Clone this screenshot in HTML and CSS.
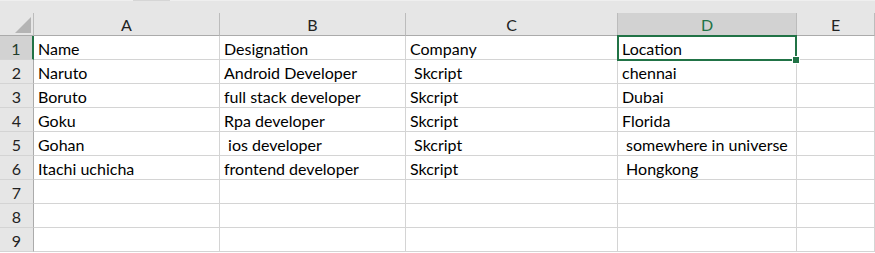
FILE: index.html
```html
<!DOCTYPE html>
<html>
<head>
<meta charset="utf-8">
<link rel="stylesheet" href="styles.css">
</head>
<body>
<div class="topstrip"><div class="tab-light"></div><div class="tab-dark"></div><div class="tab-rest"></div></div>
<div class="sheet">
  <div class="grid">
    <div class="corner"><div class="tri"></div></div>
    <div class="ch">A</div>
    <div class="ch">B</div>
    <div class="ch">C</div>
    <div class="ch sel">D</div>
    <div class="ch">E</div>

    <div class="rh sel">1</div>
    <div class="c">Name</div><div class="c">Designation</div><div class="c">Company</div><div class="c">Location</div><div class="c"></div>

    <div class="rh">2</div>
    <div class="c">Naruto</div><div class="c">Android Developer</div><div class="c"> Skcript</div><div class="c">chennai</div><div class="c"></div>

    <div class="rh">3</div>
    <div class="c">Boruto</div><div class="c">full stack developer</div><div class="c">Skcript</div><div class="c">Dubai</div><div class="c"></div>

    <div class="rh">4</div>
    <div class="c">Goku</div><div class="c">Rpa developer</div><div class="c">Skcript</div><div class="c">Florida</div><div class="c"></div>

    <div class="rh">5</div>
    <div class="c">Gohan</div><div class="c"> ios developer</div><div class="c"> Skcript</div><div class="c"> somewhere in universe</div><div class="c"></div>

    <div class="rh">6</div>
    <div class="c">Itachi uchicha</div><div class="c">frontend developer</div><div class="c">Skcript</div><div class="c"> Hongkong</div><div class="c"></div>

    <div class="rh">7</div>
    <div class="c"></div><div class="c"></div><div class="c"></div><div class="c"></div><div class="c"></div>

    <div class="rh">8</div>
    <div class="c"></div><div class="c"></div><div class="c"></div><div class="c"></div><div class="c"></div>

    <div class="rh">9</div>
    <div class="c"></div><div class="c"></div><div class="c"></div><div class="c"></div><div class="c"></div>
  </div>
  <div class="selbox"><div class="handle"></div></div>
</div>
</body>
</html>
```
FILE: styles.css
```css
html, body {
  margin: 0;
  padding: 0;
  background: #ffffff;
  overflow: hidden;
}
body {
  width: 875px;
  height: 253px;
  font-family: Lato, "Open Sans", sans-serif;
  font-size: 16px;
  color: #000;
}
.topstrip {
  height: 13px;
  display: flex;
  background: #e6e6e6;
}
.tab-light {
  width: 133px;
  border-top: 1px solid #efefef;
}
.tab-dark {
  width: 37px;
  border-top: 1px solid #d6d6d6;
}
.tab-rest {
  flex: 1;
  border-top: 1px solid #efefef;
}
.sheet {
  position: relative;
}
.grid {
  display: grid;
  grid-template-columns: 34px 186px 186px 212px 179px 1fr;
  grid-template-rows: 23px repeat(9, 24px);
}
.corner {
  background: #e6e6e6;
  border-right: 1px solid #bcbcbc;
  border-bottom: 1px solid #ababab;
  position: relative;
}
.tri {
  position: absolute;
  right: 2px;
  bottom: 2px;
  width: 0;
  height: 0;
  border-left: 16px solid transparent;
  border-bottom: 16px solid #b4b4b4;
}
.ch {
  background: #e6e6e6;
  border-right: 1px solid #bcbcbc;
  border-bottom: 1px solid #ababab;
  display: flex;
  align-items: center;
  justify-content: center;
  color: #222;
  font-size: 16px;
  padding-top: 1px;
  box-sizing: border-box;
}
.ch.sel {
  background: #d2d2d2;
  color: #217346;
}
.rh {
  background: #e6e6e6;
  border-right: 1px solid #ababab;
  border-bottom: 1px solid #d4d4d4;
  display: flex;
  align-items: center;
  justify-content: center;
  color: #222;
  font-size: 16px;
  padding-top: 1px;
  box-sizing: border-box;
}
.rh.sel {
  background: #d2d2d2;
  color: #1f3d2c;
  border-right: 2px solid #217346;
}
.c {
  border-right: 1px solid #d4d4d4;
  border-bottom: 1px solid #d4d4d4;
  padding: 2px 0 0 4px;
  white-space: pre;
  overflow: visible;
  display: flex;
  align-items: center;
  box-sizing: border-box;
}
.selbox {
  position: absolute;
  left: 617px;
  top: 22px;
  width: 176px;
  height: 22px;
  border: 2px solid #217346;
}
.handle {
  position: absolute;
  right: -5px;
  bottom: -5px;
  width: 6px;
  height: 6px;
  background: #217346;
  border: 1px solid #fff;
}
```
